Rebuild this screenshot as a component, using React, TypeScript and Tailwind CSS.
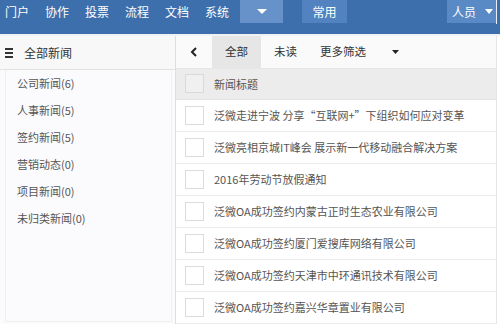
import React from "react";

const navItems = ["门户", "协作", "投票", "流程", "文档"];
const sideItems = [
  "公司新闻(6)",
  "人事新闻(5)",
  "签约新闻(5)",
  "营销动态(0)",
  "项目新闻(0)",
  "未归类新闻(0)",
];
const rows = [
  "泛微走进宁波 分享“互联网+”下组织如何应对变革",
  "泛微亮相京城IT峰会 展示新一代移动融合解决方案",
  "2016年劳动节放假通知",
  "泛微OA成功签约内蒙古正时生态农业有限公司",
  "泛微OA成功签约厦门爱搜库网络有限公司",
  "泛微OA成功签约天津市中环通讯技术有限公司",
  "泛微OA成功签约嘉兴华章置业有限公司",
];

function Tri({ color, w = 10, h = 5 }: { color: string; w?: number; h?: number }) {
  return (
    <svg width={w} height={h} viewBox={`0 0 ${w} ${h}`}>
      <polygon points={`0,0 ${w},0 ${w / 2},${h}`} fill={color} />
    </svg>
  );
}

function Box() {
  return <div className="w-[19px] h-[19px] border border-[#dcdcdc] bg-white shrink-0" />;
}

export default function App() {
  return (
    <div className="w-[500px] h-[324px] overflow-hidden bg-white font-['Noto_Sans_CJK_SC','Noto_Sans',sans-serif] text-[11px] text-[#555]">
      {/* top bar */}
      <div className="h-[34px] bg-[#3d6fac] flex items-start pl-[5px] text-white text-[12px]">
        {navItems.map((n) => (
          <div key={n} className="w-[40px] h-[24px] flex items-center">
            {n}
          </div>
        ))}
        <div className="w-[35px] h-[24px] flex items-center">系统</div>
        <div className="w-[43px] h-[23px] bg-[#6792c9] flex items-center justify-center">
          <Tri color="#ffffff" w={10} h={5} />
        </div>
        <div className="ml-[19px] w-[45px] h-[23px] bg-[#5282bf] flex items-center justify-center">
          常用
        </div>
        <div className="flex-1" />
        <div className="w-[49px] h-[23px] bg-[#5a8ac6] flex items-center pl-[5px] gap-[9px]">
          <span>人员</span>
          <Tri color="#ffffff" w={8} h={5} />
        </div>
        <div className="w-px h-[24px] bg-[#e8eef7]" />
        <div className="w-[3px]" />
      </div>

      <div className="flex h-[290px] border-t-[2px] border-[#eef1f6]">
        {/* sidebar */}
        <div className="w-[176px] shrink-0 border-r border-[#dedede] bg-[#fbfbfd] flex flex-col">
          <div className="h-[34px] flex items-center pl-[5px] border-b border-[#e2e2e2] bg-[#f8f8f9]">
            <div className="flex flex-col gap-[2px] w-[8px]">
              <div className="h-[2px] bg-[#333]" />
              <div className="h-[2px] bg-[#333]" />
              <div className="h-[2px] bg-[#333]" />
            </div>
            <span className="ml-[11px] text-[12px] text-[#333]">全部新闻</span>
          </div>
          <div className="flex-1 ml-[5px] mr-[3px] mb-[2px] border-l border-r border-b border-[#efefef] flex flex-col">
            {sideItems.map((s) => (
              <div key={s} className="h-[27px] flex items-center pl-[11px]">
                {s}
              </div>
            ))}
          </div>
        </div>

        {/* right panel */}
        <div className="flex-1 flex flex-col border-r border-[#e6e6e6] mr-[3px]">
          <div className="h-[34px] flex items-stretch bg-[#fafafa] border-b border-[#e6e6e6] text-[11.5px] text-[#333]">
            <div className="w-[36px] flex items-center pl-[14px]">
              <svg width="7" height="10" viewBox="0 0 7 10">
                <polyline points="6,1 2,5 6,9" fill="none" stroke="#222" strokeWidth="2" />
              </svg>
            </div>
            <div className="w-[49px] bg-[#e6e6e6] flex items-center justify-center">全部</div>
            <div className="ml-[13px] flex items-center">未读</div>
            <div className="ml-[23px] flex items-center">更多筛选</div>
            <div className="ml-[26px] flex items-center">
              <Tri color="#222" w={7} h={4} />
            </div>
          </div>
          <div className="h-[32px] flex items-center bg-[#ececec] border-b border-[#e4e4e4]">
            <div className="ml-[9px]">
              <div className="w-[19px] h-[19px] border border-[#d9d9d9] bg-[#f0f0f0]" />
            </div>
            <span className="ml-[10px]">新闻标题</span>
          </div>
          {rows.map((r) => (
            <div key={r} className="h-[32px] shrink-0 flex items-center border-b border-[#ececec] bg-white">
              <div className="ml-[9px]">
                <Box />
              </div>
              <span className="ml-[10px] whitespace-nowrap">{r}</span>
            </div>
          ))}
        </div>
      </div>
    </div>
  );
}
